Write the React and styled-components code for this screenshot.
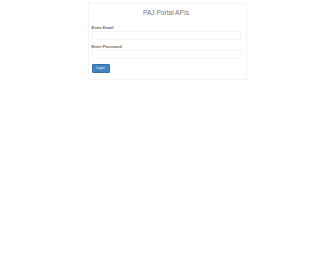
import React from 'react';
import styled, { createGlobalStyle } from 'styled-components';

const GlobalStyle = createGlobalStyle`
  body {
    margin: 0;
    background: #ffffff;
    font-family: "Liberation Sans", Arial, sans-serif;
  }
`;

const Page = styled.div`
  width: 336px;
  height: 280px;
  display: flex;
  justify-content: center;
  padding-top: 3px;
  box-sizing: border-box;
`;

const Panel = styled.div`
  width: 159px;
  height: 77px;
  margin-left: -2px;
  box-sizing: border-box;
  border: 1px solid #f5f5f5;
  box-shadow: 0 0 2px rgba(0, 0, 0, 0.03);
  padding: 4px 5px 0 3px;
  display: flex;
  flex-direction: column;
`;

const Title = styled.h3`
  margin: 0 0 8px;
  text-align: center;
  font-size: 6.6px;
  font-weight: normal;
  color: #777;
  line-height: 9px;
`;

const Field = styled.div`
  display: flex;
  flex-direction: column;
`;

const Label = styled.label`
  font-size: 4px;
  font-weight: bold;
  color: #666;
  line-height: 5px;
  margin-bottom: 1px;
`;

const Input = styled.input`
  height: 9px;
  box-sizing: border-box;
  border: 1px solid #f5f5f5;
  border-radius: 1px;
  padding: 0;
  margin: 0 0 4px;
  background: #fff;
`;

const Button = styled.button`
  align-self: flex-start;
  width: 18px;
  height: 9px;
  padding: 0;
  margin-top: 1px;
  border: 1px solid #3572a8;
  border-radius: 1px;
  background: #4583c0;
  color: #e8f0f8;
  font-family: "Liberation Sans", Arial, sans-serif;
  font-size: 3.5px;
  line-height: 7px;
`;

export default function App() {
  return (
    <>
      <GlobalStyle />
      <Page>
        <Panel>
          <Title>PAJ Portal APIs</Title>
          <Field>
            <Label>Enter Email</Label>
            <Input type="email" />
          </Field>
          <Field>
            <Label>Enter Password</Label>
            <Input type="password" />
          </Field>
          <Button>Login</Button>
        </Panel>
      </Page>
    </>
  );
}
